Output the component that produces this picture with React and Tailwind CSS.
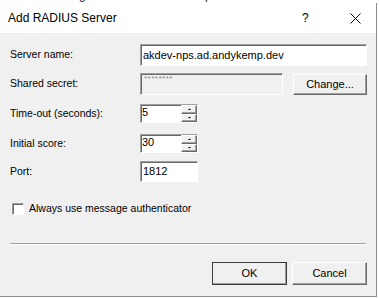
import React from "react";

const sunken =
  "border border-t-[#a0a0a0] border-l-[#a0a0a0] border-b-white border-r-white shadow-[inset_1px_1px_0_#696969]";
const raised =
  "bg-[#f0f0f0] border border-t-white border-l-white border-b-[#696969] border-r-[#696969] shadow-[inset_-1px_-1px_0_#a0a0a0]";

const Label = ({ children }) => (
  <div className="w-[130px] shrink-0 text-[10.5px] text-black">{children}</div>
);

// tiny up/down arrow pair for the spin boxes
const SpinButtons = () => (
  <div className="flex h-full w-[16px] flex-col">
    {["M2 4 L3.5 2.5 L5 4 Z", "M2 2 L3.5 3.5 L5 2 Z"].map((d, i) => (
      <div key={i} className={`${raised} flex flex-1 items-center justify-center`}>
        <svg width="7" height="6" viewBox="0 0 7 6">
          <path d={d} fill="#000" />
        </svg>
      </div>
    ))}
  </div>
);

const SpinBox = ({ value }) => (
  <div className={`${sunken} flex h-[19px] w-[58px] items-stretch bg-white`}>
    <div className="flex-1 pl-[1px] text-[11px] leading-[15px] text-black">{value}</div>
    <SpinButtons />
  </div>
);

export default function App() {
  return (
    <div
      className="h-[299px] w-[379px] overflow-hidden bg-white"
      style={{ fontFamily: '"Liberation Sans", Arial, sans-serif' }}
    >
      {/* window behind the dialog, mostly hidden */}
      <div className="h-[3px] overflow-hidden">
        <div className="-mt-[11px] pl-[15px] text-[12px] leading-[12px] text-[#222] whitespace-nowrap">
          The following RADIUS servers are queried in order
        </div>
      </div>

      <div className="flex h-[294px] w-[377px] flex-col border-r border-b border-[#8c8c8c]">
        {/* title bar */}
        <div className="flex h-[30px] shrink-0 items-center bg-white pl-[8px]">
          <div className="flex-1 text-[12px] text-black">Add RADIUS Server</div>
          <div className="w-[14px] text-[12px] text-black">?</div>
          <div className="ml-[33px] mr-[15px] flex w-[12px] justify-center">
            <svg width="11" height="11" viewBox="0 0 11 11">
              <path d="M0.5 0.5 L10.5 10.5 M10.5 0.5 L0.5 10.5" stroke="#000" strokeWidth="1" />
            </svg>
          </div>
        </div>

        {/* body */}
        <div className="flex flex-1 flex-col bg-[#f0f0f0] pl-[10px]">
          <div className="mt-[11px] flex h-[22px] items-center">
            <Label>Server name:</Label>
            <div className={`${sunken} flex h-full w-[227px] items-center bg-white pl-[2px] text-[11px] text-black`}>
              akdev-nps.ad.andykemp.dev
            </div>
          </div>

          <div className="mt-[7px] flex h-[22px] items-center">
            <Label>Shared secret:</Label>
            <div className={`${sunken} h-full w-[143px] bg-[#f0f0f0] pl-[3px] text-[8px] leading-[10px] tracking-[0.5px] text-[#8a8a8a]`}>
              ********
            </div>
            <button className={`${raised} ml-[10px] h-[21px] w-[74px] text-[11px] text-black`}>
              Change...
            </button>
          </div>

          <div className="mt-[9px] flex h-[19px] items-center">
            <Label>Time-out (seconds):</Label>
            <SpinBox value="5" />
          </div>

          <div className="mt-[11px] flex h-[19px] items-center">
            <Label>Initial score:</Label>
            <SpinBox value="30" />
          </div>

          <div className="mt-[8px] flex h-[21px] items-center">
            <Label>Port:</Label>
            <div className={`${sunken} flex h-full w-[58px] items-center bg-white pl-[2px] text-[11px] text-black`}>
              1812
            </div>
          </div>

          <div className="mt-[20px] flex h-[13px] items-center">
            <div className={`${sunken} ml-[2px] h-[12px] w-[12px] bg-white`} />
            <div className="ml-[5px] text-[10.5px] text-black">Always use message authenticator</div>
          </div>

          <div className="mt-[28px] h-[2px] w-[356px] border-t border-b border-t-[#a0a0a0] border-b-white" />

          <div className="mt-[17px] flex w-[357px] justify-end gap-[5px]">
            <button className={`${raised} h-[23px] w-[75px] outline outline-1 outline-[#3c3c3c] -outline-offset-1 text-[11px] text-black`}>
              OK
            </button>
            <button className={`${raised} h-[23px] w-[75px] text-[11px] text-black`}>Cancel</button>
          </div>
        </div>
      </div>
    </div>
  );
}
